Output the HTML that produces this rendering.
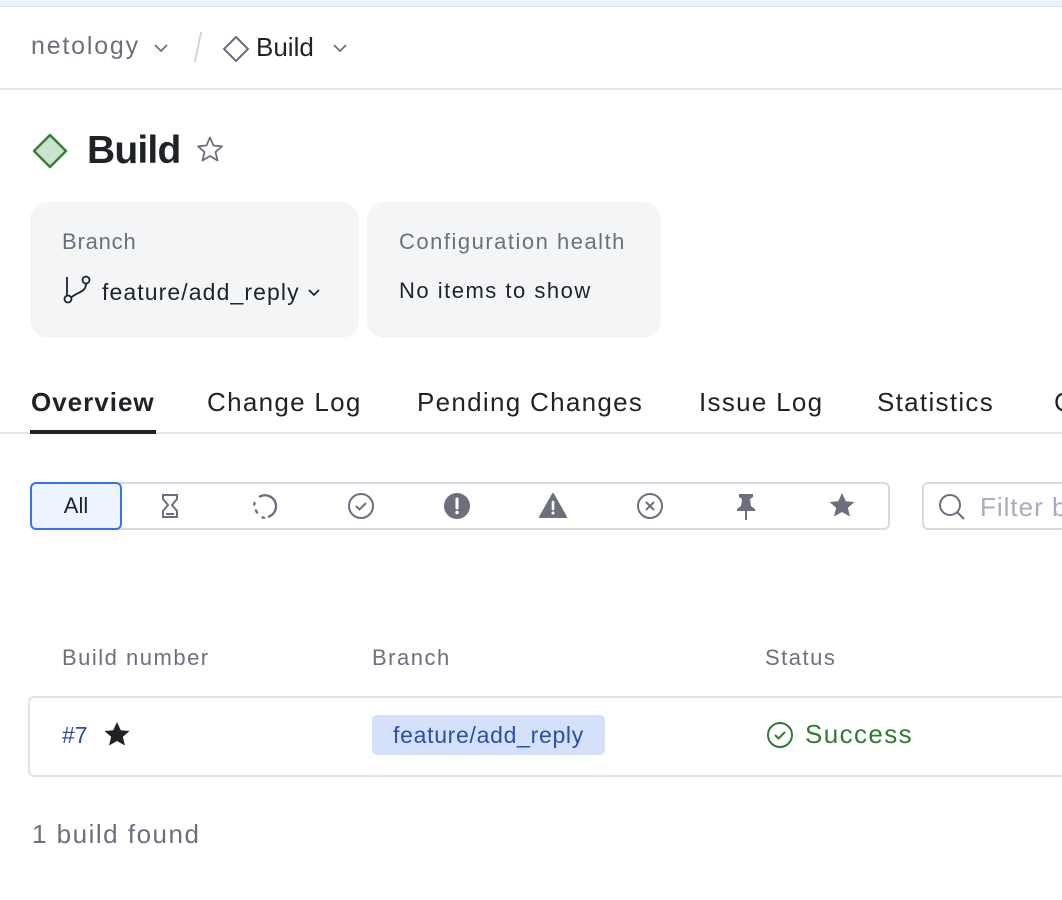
<!DOCTYPE html>
<html><head><meta charset="utf-8"><style>
*{box-sizing:border-box;margin:0;padding:0}
body{width:1062px;height:900px;overflow:hidden;background:#fff;font-family:"Liberation Sans",sans-serif;position:relative;color:#1f2328}
.a{position:absolute;white-space:nowrap}
.g{color:#6c707e}
</style></head><body>
<div class="a" style="left:0;top:0;width:1062px;height:7px;background:#eef2fc;border-bottom:1px solid #dfe1e8"></div>
<div class="a g" style="left:31px;top:32px;font-size:25px;letter-spacing:1.8px;color:#6c707e">netology</div>
<svg class="a" style="left:153px;top:43px" width="16" height="10"><path d="M2 2l6 6 6-6" fill="none" stroke="#6c707e" stroke-width="1.8"/></svg>
<div class="a" style="left:197px;top:32px;width:2px;height:30px;background:#d3d5db;transform:skewX(-12deg)"></div>
<svg class="a" style="left:222px;top:35px" width="28" height="28"><path d="M14 2L26 14 14 26 2 14Z" fill="none" stroke="#6c707e" stroke-width="2" stroke-linejoin="round"/></svg>
<div class="a" style="left:256px;top:32px;font-size:26px;color:#1f2328">Build</div>
<svg class="a" style="left:332px;top:43px" width="16" height="10"><path d="M2 2l6 6 6-6" fill="none" stroke="#6c707e" stroke-width="1.8"/></svg>
<div class="a" style="left:0;top:88px;width:1062px;height:2px;background:#e4e5ea"></div>
<svg class="a" style="left:31px;top:132px" width="38" height="38"><path d="M19 3L35 19 19 35 3 19Z" fill="#c9e4cb" stroke="#3a7f3a" stroke-width="2.5" stroke-linejoin="round"/></svg>
<div class="a" style="left:87px;top:129px;font-size:39px;font-weight:bold;letter-spacing:-0.8px;color:#1f2328">Build</div>
<svg class="a" style="left:195px;top:135px" width="30" height="30"><path d="M15 2.5l3.5 8 8.5.8-6.5 5.7 2 8.5L15 21l-7.5 4.5 2-8.5L3 11.3l8.5-.8z" fill="none" stroke="#6c707e" stroke-width="1.8" stroke-linejoin="round"/></svg>
<div class="a" style="left:30px;top:202px;width:329px;height:136px;background:#f4f5f7;border-radius:18px"></div>
<div class="a" style="left:367px;top:202px;width:294px;height:136px;background:#f4f5f7;border-radius:18px"></div>
<div class="a g" style="left:62px;top:229px;font-size:22px;letter-spacing:0.8px">Branch</div>
<svg class="a" style="left:62px;top:275px" width="30" height="30"><circle cx="6" cy="24" r="3.5" fill="none" stroke="#1f2328" stroke-width="1.8"/><circle cx="24" cy="5" r="3.5" fill="none" stroke="#1f2328" stroke-width="1.8"/><path d="M5 2v18M24 8.5c0 9-8 8-15 14" fill="none" stroke="#1f2328" stroke-width="1.8"/></svg>
<div class="a" style="left:102px;top:279px;font-size:23px;letter-spacing:1.1px">feature/add_reply</div>
<svg class="a" style="left:307px;top:288px" width="14" height="9"><path d="M2 2l5 5 5-5" fill="none" stroke="#1f2328" stroke-width="1.8"/></svg>
<div class="a g" style="left:399px;top:229px;font-size:22px;letter-spacing:1.5px">Configuration health</div>
<div class="a" style="left:399px;top:278px;font-size:22px;letter-spacing:1.5px">No items to show</div>
<div class="a" style="left:31px;top:387px;font-size:26px;font-weight:bold;letter-spacing:1px">Overview</div>
<div class="a" style="left:207px;top:387px;font-size:26px;letter-spacing:1.3px">Change Log</div>
<div class="a" style="left:417px;top:387px;font-size:26px;letter-spacing:1.3px">Pending Changes</div>
<div class="a" style="left:699px;top:387px;font-size:26px;letter-spacing:1.3px">Issue Log</div>
<div class="a" style="left:877px;top:387px;font-size:26px;letter-spacing:1.3px">Statistics</div>
<div class="a" style="left:1054px;top:387px;font-size:26px">C</div>
<div class="a" style="left:0;top:432px;width:1062px;height:2px;background:#e4e5ea"></div>
<div class="a" style="left:30px;top:430px;width:126px;height:4px;background:#1f2328"></div>
<div class="a" style="left:30px;top:482px;width:860px;height:48px;border:2px solid #d8dae0;border-radius:6px"></div>
<div class="a" style="left:30px;top:482px;width:92px;height:48px;border:2px solid #3574f0;border-radius:6px;background:#edf3ff;font-size:22px;text-align:center;line-height:44px">All</div>
<svg class="a" style="left:156px;top:492px" width="28" height="28" fill="none" stroke="#6c707e" stroke-width="2"><path d="M7 3h14v4l-5 6 5 6v6H7v-6l5-6-5-6zM10 22h8"/></svg>
<svg class="a" style="left:251px;top:492px" width="28" height="28" fill="none" stroke="#6c707e" stroke-width="2.4" stroke-linecap="round"><path d="M9 4.5A11 11 0 0 1 25 14 11 11 0 0 1 18 24.5"/><path d="M13 25.8l-1.5-.4M6 20.5l-1-2M3.2 12.5l.3-1.5"/></svg>
<svg class="a" style="left:347px;top:492px" width="28" height="28" fill="none" stroke="#6c707e" stroke-width="2"><circle cx="14" cy="14" r="12"/><path d="M9 14l3.5 3.5L19 11"/></svg>
<svg class="a" style="left:443px;top:492px" width="28" height="28"><circle cx="14" cy="14" r="13" fill="#6c707e"/><path d="M14 7v9" stroke="#fff" stroke-width="3" stroke-linecap="round"/><circle cx="14" cy="20.5" r="1.7" fill="#fff"/></svg>
<svg class="a" style="left:538px;top:492px" width="30" height="28"><path d="M15 2L28 25H2Z" fill="#6c707e" stroke="#6c707e" stroke-width="2" stroke-linejoin="round"/><path d="M15 10v7" stroke="#fff" stroke-width="2.6" stroke-linecap="round"/><circle cx="15" cy="21" r="1.5" fill="#fff"/></svg>
<svg class="a" style="left:636px;top:492px" width="28" height="28" fill="none" stroke="#6c707e" stroke-width="2"><circle cx="14" cy="14" r="12"/><path d="M10 10l8 8M18 10l-8 8"/></svg>
<svg class="a" style="left:733px;top:492px" width="26" height="30"><path d="M6 2h14v3l-3 2 1 7 4 3v2H4v-2l4-3 1-7-3-2z" fill="#6c707e"/><path d="M13 19v9" stroke="#6c707e" stroke-width="2"/></svg>
<svg class="a" style="left:827px;top:491px" width="30" height="30"><path d="M15 2l3.8 8.2 8.7.8-6.6 5.8 2 8.7L15 21l-7.9 4.5 2-8.7L2.5 11l8.7-.8z" fill="#6c707e"/></svg>
<div class="a" style="left:922px;top:482px;width:160px;height:48px;border:2px solid #d8dae0;border-radius:6px"></div>
<svg class="a" style="left:937px;top:492px" width="32" height="30" fill="none" stroke="#6c707e" stroke-width="2"><circle cx="13" cy="13" r="10"/><path d="M20 20l7 7"/></svg>
<div class="a" style="left:980px;top:492px;font-size:26px;letter-spacing:1px;color:#a8adbd">Filter b</div>
<div class="a g" style="left:62px;top:645px;font-size:22px;letter-spacing:1.5px">Build number</div>
<div class="a g" style="left:372px;top:645px;font-size:22px;letter-spacing:1.5px">Branch</div>
<div class="a g" style="left:765px;top:645px;font-size:22px;letter-spacing:1.5px">Status</div>
<div class="a" style="left:28px;top:696px;width:1060px;height:81px;border:2px solid #e1e3e8;border-radius:6px"></div>
<div class="a" style="left:62px;top:722px;font-size:23px;color:#2a4fa8">#7</div>
<svg class="a" style="left:102px;top:720px" width="30" height="30"><path d="M15 2l3.8 8.2 8.7.8-6.6 5.8 2 8.7L15 21l-7.9 4.5 2-8.7L2.5 11l8.7-.8z" fill="#1f2328"/></svg>
<div class="a" style="left:372px;top:715px;width:233px;height:40px;background:#d5e1fb;border-radius:5px;font-size:23px;letter-spacing:0.7px;color:#2a4fa8;line-height:40px;text-align:center">feature/add_reply</div>
<svg class="a" style="left:766px;top:720px" width="30" height="30" fill="none" stroke="#2e7d32" stroke-width="2"><circle cx="14" cy="15" r="12"/><path d="M9 15l3.5 3.5L19 12"/></svg>
<div class="a" style="left:805px;top:719px;font-size:26px;letter-spacing:1.4px;color:#2e7d32">Success</div>
<div class="a g" style="left:32px;top:819px;font-size:26px;letter-spacing:1.5px">1 build found</div>
</body></html>
